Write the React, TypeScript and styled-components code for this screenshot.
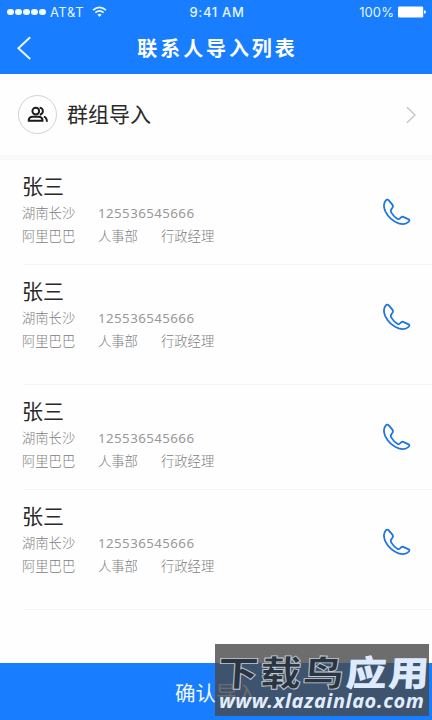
import React from "react";
import styled, { createGlobalStyle } from "styled-components";

const GlobalStyle = createGlobalStyle`
  * { box-sizing: border-box; }
  body { margin: 0; background: #fff; }
`;

const cjk = `"Noto Sans CJK SC", sans-serif`;

const Screen = styled.div`
  position: relative;
  display: flex;
  flex-direction: column;
  width: 432px;
  height: 720px;
  overflow: hidden;
  background: #fefefe;
  font-family: ${cjk};
`;

const Header = styled.header`
  height: 74px;
  flex: none;
  background: #187dff;
  color: #fff;
`;

const StatusBar = styled.div`
  display: grid;
  grid-template-columns: 1fr auto 1fr;
  align-items: center;
  height: 24px;
  padding: 0 6px 0 7px;
  font: 13px/24px Inter, sans-serif;
  color: #e4f7ff;
`;

const StatusGroup = styled.div<{ $end?: boolean }>`
  display: flex;
  align-items: center;
  justify-content: ${(p) => (p.$end ? "flex-end" : "flex-start")};
`;

const Dots = styled.div`
  display: flex;
  gap: 1.6px;
  margin-right: 4px;
`;

const Dot = styled.i`
  width: 6.5px;
  height: 6.5px;
  border-radius: 50%;
  background: #f0fbff;
`;

const Carrier = styled.span`
  width: 34px;
  margin-right: 8px;
  font-size: 13px;
  letter-spacing: 0.6px;
  white-space: nowrap;
`;

const Clock = styled.span`
  padding-left: 1px;
  font-size: 13px;
  font-weight: 500;
  letter-spacing: 0.7px;
`;

const Percent = styled.span`
  margin-right: 4px;
  font-size: 13px;
  letter-spacing: 0.1px;
`;

const NavBar = styled.div`
  display: grid;
  grid-template-columns: 48px 1fr 48px;
  align-items: center;
  height: 48px;
`;

const BackButton = styled.button`
  display: flex;
  padding: 0 0 0 16px;
  border: 0;
  background: none;
  color: #e6f8ff;
`;

const Title = styled.h1`
  margin: 0;
  padding-left: 3px;
  font: 700 20px/30px ${cjk};
  letter-spacing: 2.9px;
  text-align: center;
  white-space: nowrap;
`;

const GroupRow = styled.div`
  display: flex;
  align-items: center;
  flex: none;
  height: 81px;
  padding: 0 16px 0 18px;
`;

const GroupIcon = styled.div`
  display: flex;
  align-items: center;
  justify-content: center;
  width: 39px;
  height: 39px;
  margin-right: 10px;
  border: 1.5px solid #d2d2d2;
  border-radius: 50%;
`;

const GroupLabel = styled.span`
  flex: 1;
  padding-bottom: 3px;
  color: #2a2a2a;
  font-size: 21px;
  font-weight: 400;
  line-height: 30px;
`;

const Band = styled.div`
  flex: none;
  height: 5px;
  background: #f9f9f9;
`;

const Contact = styled.article<{ $height: number }>`
  display: flex;
  justify-content: space-between;
  flex: none;
  height: ${(p) => p.$height}px;
  margin-left: 24px;
  padding: 10px 21px 0 0;
  border-bottom: 1px solid #f5f5f5;
`;

const Details = styled.div`
  margin-left: -2px;
  color: #808080;
`;

const Name = styled.h2`
  height: 31px;
  margin: 0;
  color: #2a2a2a;
  font: 400 21px/30px ${cjk};
`;

const InfoRow = styled.div`
  display: grid;
  grid-template-columns: 76px 63px auto;
  height: 23px;
  font-size: 13.3px;
  font-weight: 300;
  line-height: 23px;
  white-space: nowrap;
`;

const PhoneNumber = styled.span`
  padding-top: 1px;
  font-family: "Noto Sans", sans-serif;
  font-size: 13.3px;
  font-weight: 400;
  letter-spacing: 0.43px;
  color: #999;
`;

const CallButton = styled.button`
  display: flex;
  align-self: flex-start;
  margin-top: 28px;
  padding: 0;
  border: 0;
  background: none;
`;

const Confirm = styled.button`
  height: 57px;
  margin-top: auto;
  padding: 0;
  border: 0;
  background: #187dff;
  color: #eef8ff;
  font: 400 20.5px/56px ${cjk};
`;

const Watermark = styled.div`
  position: absolute;
  top: 644px;
  left: 215px;
  width: 214px;
  height: 72px;
  padding-left: 3px;
  background: rgba(72, 72, 72, 0.8);
  white-space: nowrap;
`;

const Brand = styled.div`
  display: flex;
  height: 45px;
  padding-top: 7px;
  font: 900 41px/41px ${cjk};
`;

const BrandPart = styled.span<{ $outlined?: boolean }>`
  color: ${(p) => (p.$outlined ? "#2b3441" : "#deebff")};
  -webkit-text-stroke: ${(p) => (p.$outlined ? "1px #c3cad2" : "0")};
  letter-spacing: 1.5px;
  transform: scaleY(0.86) skewX(-3deg);
`;

const Site = styled.div`
  padding-left: 1px;
  color: #e1edff;
  font: italic 700 20px/24px "Noto Sans", sans-serif;
  letter-spacing: 0.6px;
`;

const WifiIcon = () => (
  <svg width="15" height="12" viewBox="0 0 15 12" fill="none" stroke="currentColor" strokeWidth="1.7">
    <path d="M1 4.2Q7.5-1.4 14 4.2M3.3 6.7Q7.5 3.2 11.7 6.7" />
    <path d="M5.3 8.6Q7.5 6.9 9.7 8.6L7.5 11Z" fill="currentColor" stroke="none" />
  </svg>
);

const BatteryIcon = () => (
  <svg width="28" height="12" viewBox="0 0 28 12" fill="#fff">
    <rect x="0" y="0.5" width="25.2" height="11" rx="1.2" />
    <path d="M26 4.2Q28 4.5 28 6T26 7.8Z" />
  </svg>
);

const BackIcon = () => (
  <svg width="16" height="24" viewBox="0 0 16 24" fill="none" stroke="currentColor" strokeWidth="2">
    <path d="M14.2 1.2 2.4 12.2 14.2 23" />
  </svg>
);

const PeopleIcon = () => (
  <svg width="22" height="18" viewBox="0 0 22 18" fill="none" stroke="#1c1c1c" strokeWidth="1.9">
    <circle cx="8.8" cy="5.1" r="3.4" />
    <path d="M1.7 14.8V13.8Q2.4 10.8 5.5 10.8H11.7Q14.8 10.8 15.5 13.8V14.8ZM12.6 1.6Q15.9 2.2 15.9 5.1T12.8 8.7M16.8 10.6Q19.9 11.6 19.9 15.7" />
  </svg>
);

const ChevronIcon = () => (
  <svg width="10" height="18" viewBox="0 0 10 18" fill="none" stroke="#c4c4c4" strokeWidth="1.3">
    <path d="M1 1.2 9 9 1 16.8" />
  </svg>
);

const PhoneIcon = () => (
  <svg width="29" height="29" viewBox="36 39 87 87" fill="none" stroke="#1f75e0" strokeWidth="5.4" strokeLinejoin="round">
    <path d="M47 47Q52 41 57 47L67 59Q71 64 66 70Q60 76 64 83Q71 95 83 102Q87 104 91 99Q96 93 103 97L116 103Q121 106 115 111Q106 121 86 115Q59 105 46 79Q37 58 47 47Z" />
  </svg>
);

const contacts = [
  { id: 1, height: 105 },
  { id: 2, height: 120 },
  { id: 3, height: 105 },
  { id: 4, height: 120 },
];

export default function App() {
  return (
    <>
      <GlobalStyle />
      <Screen>
        <Header>
          <StatusBar>
            <StatusGroup>
              <Dots>
                {[0, 1, 2, 3, 4].map((dot) => (
                  <Dot key={dot} />
                ))}
              </Dots>
              <Carrier>AT&amp;T</Carrier>
              <WifiIcon />
            </StatusGroup>
            <Clock>9:41 AM</Clock>
            <StatusGroup $end>
              <Percent>100%</Percent>
              <BatteryIcon />
            </StatusGroup>
          </StatusBar>
          <NavBar>
            <BackButton aria-label="返回">
              <BackIcon />
            </BackButton>
            <Title>联系人导入列表</Title>
          </NavBar>
        </Header>
        <GroupRow>
          <GroupIcon>
            <PeopleIcon />
          </GroupIcon>
          <GroupLabel>群组导入</GroupLabel>
          <ChevronIcon />
        </GroupRow>
        <Band />
        {contacts.map((contact) => (
          <Contact key={contact.id} $height={contact.height}>
            <Details>
              <Name>张三</Name>
              <InfoRow>
                <span>湖南长沙</span>
                <PhoneNumber>125536545666</PhoneNumber>
              </InfoRow>
              <InfoRow>
                <span>阿里巴巴</span>
                <span>人事部</span>
                <span>行政经理</span>
              </InfoRow>
            </Details>
            <CallButton aria-label="拨打电话">
              <PhoneIcon />
            </CallButton>
          </Contact>
        ))}
        <Confirm>确认导入</Confirm>
        <Watermark>
          <Brand>
            <BrandPart $outlined>下载鸟</BrandPart>
            <BrandPart>应用</BrandPart>
          </Brand>
          <Site>www.xlazainlao.com</Site>
        </Watermark>
      </Screen>
    </>
  );
}
